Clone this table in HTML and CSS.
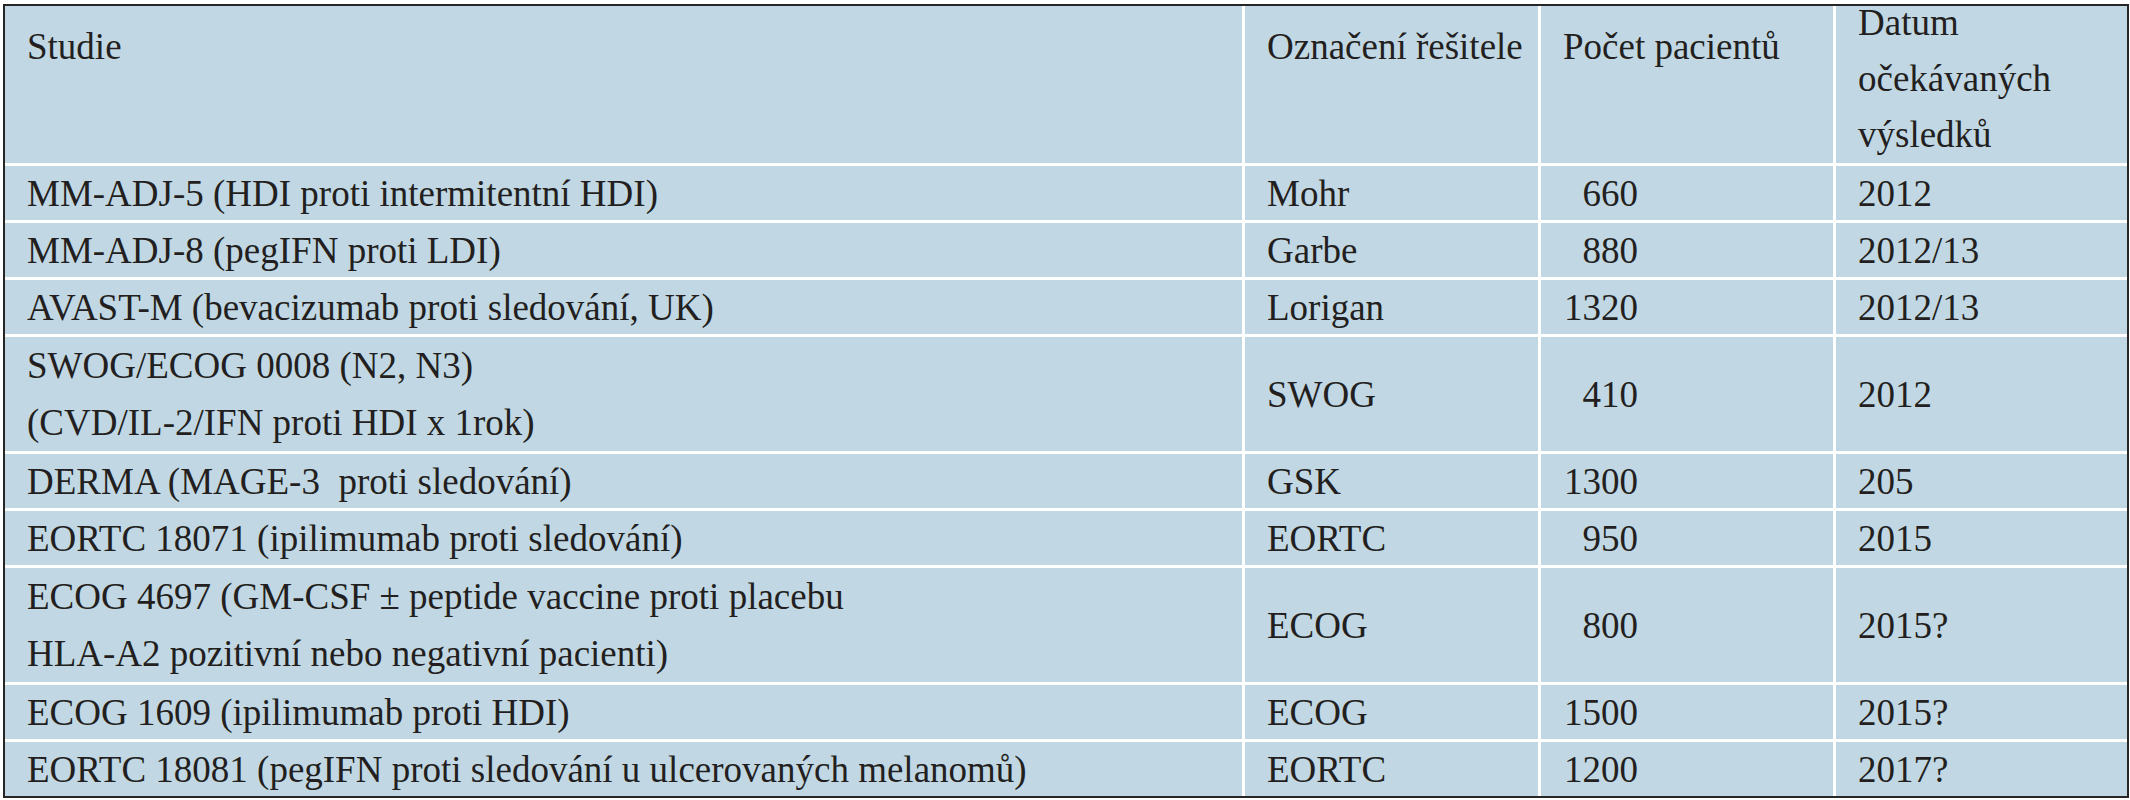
FILE: index.html
```html
<!DOCTYPE html>
<html lang="cs">
<head>
<meta charset="utf-8">
<title>Studie</title>
<link rel="stylesheet" href="styles.css">
</head>
<body>
<div class="page">
  <div class="table">
    <div class="cell head">Studie</div>
    <div class="cell head">Označení řešitele</div>
    <div class="cell head">Počet pacientů</div>
    <div class="cell head date"><div class="stack">Datum<br>očekávaných<br>výsledků</div></div>

    <div class="cell">MM-ADJ-5 (HDI proti intermitentní HDI)</div>
    <div class="cell">Mohr</div>
    <div class="cell"><span class="n">660</span></div>
    <div class="cell">2012</div>

    <div class="cell">MM-ADJ-8 (pegIFN proti LDI)</div>
    <div class="cell">Garbe</div>
    <div class="cell"><span class="n">880</span></div>
    <div class="cell">2012/13</div>

    <div class="cell">AVAST-M (bevacizumab proti sledování, UK)</div>
    <div class="cell">Lorigan</div>
    <div class="cell"><span class="n">1320</span></div>
    <div class="cell">2012/13</div>

    <div class="cell two">SWOG/ECOG 0008 (N2, N3)<br>(CVD/IL-2/IFN proti HDI x 1rok)</div>
    <div class="cell">SWOG</div>
    <div class="cell"><span class="n">410</span></div>
    <div class="cell">2012</div>

    <div class="cell">DERMA (MAGE-3&nbsp; proti sledování)</div>
    <div class="cell">GSK</div>
    <div class="cell"><span class="n">1300</span></div>
    <div class="cell">205</div>

    <div class="cell">EORTC 18071 (ipilimumab proti sledování)</div>
    <div class="cell">EORTC</div>
    <div class="cell"><span class="n">950</span></div>
    <div class="cell">2015</div>

    <div class="cell two">ECOG 4697 (GM-CSF ± peptide vaccine proti placebu<br>HLA-A2 pozitivní nebo negativní pacienti)</div>
    <div class="cell">ECOG</div>
    <div class="cell"><span class="n">800</span></div>
    <div class="cell">2015?</div>

    <div class="cell">ECOG 1609 (ipilimumab proti HDI)</div>
    <div class="cell">ECOG</div>
    <div class="cell"><span class="n">1500</span></div>
    <div class="cell">2015?</div>

    <div class="cell">EORTC 18081 (pegIFN proti sledování u ulcerovaných melanomů)</div>
    <div class="cell">EORTC</div>
    <div class="cell"><span class="n">1200</span></div>
    <div class="cell">2017?</div>
  </div>
</div>
</body>
</html>
```

FILE: styles.css
```css
html, body {
  margin: 0;
  padding: 0;
  background: #ffffff;
}

.page {
  padding: 4px 1px 2px 3px;
  width: 2126px;
}

.table {
  display: grid;
  grid-template-columns: 1237px 293px 292px 291px;
  grid-template-rows: 157px 54px 54px 54px 114px 54px 54px 114px 54px 54px;
  gap: 3px;
  background: #ffffff;
  border: 2px solid #262626;
  font-family: "Liberation Serif", "Times New Roman", serif;
  font-size: 37px;
  color: #231f20;
}

.cell {
  background: #c1d8e4;
  display: flex;
  align-items: center;
  padding: 2px 0 0 22px;
  line-height: 52px;
  white-space: nowrap;
  overflow: visible;
}

.cell.two {
  padding-top: 0;
  line-height: 57px;
}

.cell.head {
  align-items: flex-start;
  padding-top: 15px;
}

.cell.head.date {
  padding-top: 0;
  line-height: 56px;
}

.stack {
  margin-top: -11px;
}

.n {
  display: inline-block;
  width: 75px;
  text-align: right;
}
```
